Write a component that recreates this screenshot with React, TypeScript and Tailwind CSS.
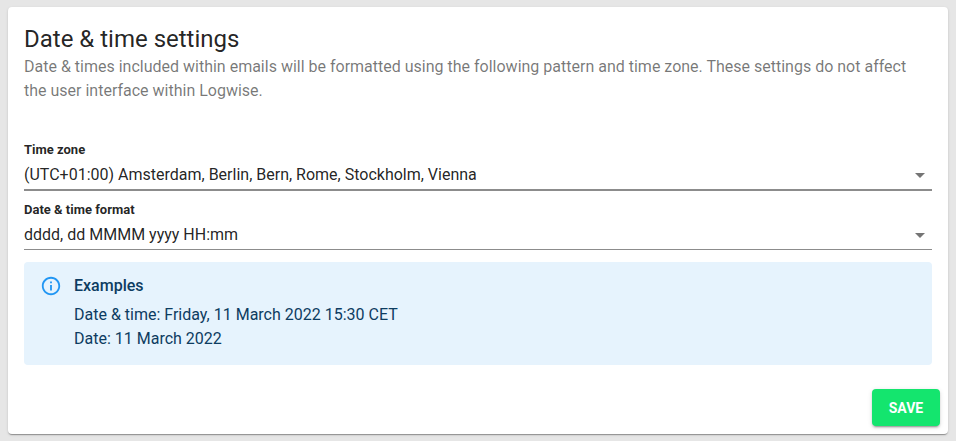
import { useState } from "react";

type SelectFieldProps = {
  id: string;
  label: string;
  options: string[];
  active?: boolean;
};

function SelectField({ id, label, options, active = false }: SelectFieldProps) {
  const [value, setValue] = useState(options[0]);
  return (
    <div>
      <label htmlFor={id} className="block text-[13px] leading-5 font-bold text-black/87">
        {label}
      </label>
      <div className={`grid items-center border-[#8c8c8c] ${active ? "border-b-2" : "border-b"}`}>
        <select
          id={id}
          value={value}
          onChange={(e) => setValue(e.target.value)}
          className="col-start-1 row-start-1 h-[29px] w-full appearance-none bg-transparent pr-8 text-base text-black/87 outline-none"
        >
          {options.map((o) => (
            <option key={o}>{o}</option>
          ))}
        </select>
        <svg viewBox="0 0 24 24" aria-hidden="true" className="pointer-events-none col-start-1 row-start-1 size-6 justify-self-end fill-[#757575]">
          <path d="M7 10l5 5 5-5z" />
        </svg>
      </div>
    </div>
  );
}

export default function App() {
  return (
    <main className="min-h-screen bg-[#e6e6e6] px-2 py-[7px] font-[Roboto,sans-serif]">
      <section className="rounded bg-white shadow-[0_2px_1px_-1px_rgba(0,0,0,0.2),0_1px_1px_rgba(0,0,0,0.14),0_1px_3px_rgba(0,0,0,0.12)]">
        <div className="p-4">
          <h1 className="text-2xl text-black/87">Date &amp; time settings</h1>
          <p className="text-base text-black/54">
            Date &amp; times included within emails will be formatted using the following pattern and time zone. These settings do not affect the user interface within Logwise.
          </p>
        </div>
        <form className="px-4 pt-[21px]" onSubmit={(e) => e.preventDefault()}>
          <div className="flex flex-col gap-[9px]">
            <SelectField id="zone" label="Time zone" options={["(UTC+01:00) Amsterdam, Berlin, Bern, Rome, Stockholm, Vienna"]} active />
            <SelectField id="format" label="Date & time format" options={["dddd, dd MMMM yyyy HH:mm"]} />
          </div>
          <div className="mt-3 flex gap-3 rounded bg-[#e6f3fd] px-4 pt-3 pb-[14px] text-[#0d3c61]">
            <svg viewBox="0 0 24 24" aria-hidden="true" className="mt-px size-[22px] shrink-0 fill-[#2196f3]">
              <path d="M11 7h2v2h-2zm0 4h2v6h-2zm1-9C6.48 2 2 6.48 2 12s4.48 10 10 10 10-4.48 10-10S17.52 2 12 2zm0 18c-4.41 0-8-3.59-8-8s3.59-8 8-8 8 3.59 8 8-3.59 8-8 8z" />
            </svg>
            <div className="text-base">
              <h2 className="mb-[5px] font-medium">Examples</h2>
              <p>Date &amp; time: Friday, 11 March 2022 15:30 CET</p>
              <p>Date: 11 March 2022</p>
            </div>
          </div>
          <div className="-mx-2 flex justify-end pt-6 pb-2">
            <button type="submit" className="h-[37px] min-w-[68px] rounded bg-[#14e56e] px-4 text-sm font-bold text-white shadow-[0_3px_1px_-2px_rgba(0,0,0,0.2),0_2px_2px_rgba(0,0,0,0.14),0_1px_5px_rgba(0,0,0,0.12)]">
              SAVE
            </button>
          </div>
        </form>
      </section>
    </main>
  );
}
